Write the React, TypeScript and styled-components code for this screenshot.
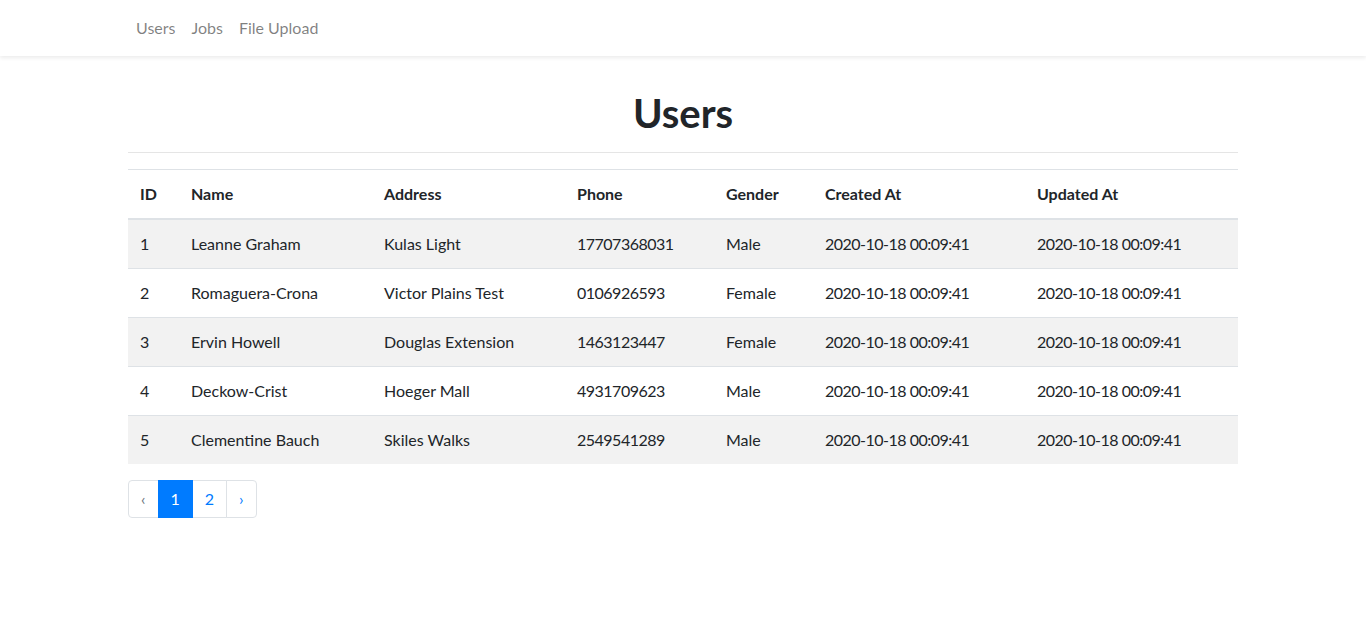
import React from "react";
import styled, { createGlobalStyle } from "styled-components";

const Global = createGlobalStyle`
  * { box-sizing: border-box; }
  body {
    margin: 0;
    font-family: "Lato", "Noto Sans", sans-serif;
    font-size: 16px;
    line-height: 1.5;
    color: #212529;
    background: #fff;
  }
`;

const NavBar = styled.nav`
  height: 56px;
  background: #fff;
  box-shadow: 0 2px 4px rgba(0, 0, 0, 0.08);
`;

const Container = styled.div`
  width: 1140px;
  margin: 0 auto;
  padding: 0 15px;
`;

const NavList = styled.ul`
  list-style: none;
  margin: 0;
  padding: 0;
  display: flex;
  height: 56px;
  align-items: center;
`;

const NavLink = styled.a`
  display: block;
  padding: 8px 8px;
  color: rgba(0, 0, 0, 0.5);
  text-decoration: none;
  font-size: 16px;
`;

const Main = styled(Container)`
  padding-top: 32px;
`;

const Title = styled.h1`
  margin: 0;
  padding-top: 3px;
  text-align: center;
  font-size: 40px;
  font-weight: 700;
  line-height: 45px;
`;

const Rule = styled.hr`
  margin: 16px 0;
  border: 0;
  border-top: 1px solid rgba(0, 0, 0, 0.1);
`;

const Table = styled.table`
  width: 100%;
  border-collapse: collapse;
  table-layout: fixed;
  margin-bottom: 16px;
`;

const Th = styled.th`
  padding: 12px;
  text-align: left;
  font-weight: 700;
  border-top: 1px solid #dee2e6;
  border-bottom: 2px solid #dee2e6;
  line-height: 24px;
`;

const Row = styled.tr<{ $striped: boolean }>`
  background: ${(p) => (p.$striped ? "#f2f2f2" : "#fff")};
`;

const Td = styled.td<{ $numeric?: boolean }>`
  padding: 12px;
  border-top: 1px solid #dee2e6;
  line-height: 24px;
  white-space: nowrap;
  letter-spacing: ${(p) => (p.$numeric ? "-0.5px" : "0")};
`;

const Pager = styled.ul`
  list-style: none;
  margin: 0;
  padding: 0;
  display: flex;
`;

const PageLink = styled.a<{ $active?: boolean; $first?: boolean; $last?: boolean; $muted?: boolean }>`
  display: block;
  padding: 8px 12px;
  line-height: 20px;
  font-size: 16px;
  text-decoration: none;
  margin-left: ${(p) => (p.$first ? "0" : "-1px")};
  border: 1px solid ${(p) => (p.$active ? "#007bff" : "#dee2e6")};
  background: ${(p) => (p.$active ? "#007bff" : "#fff")};
  color: ${(p) => (p.$active ? "#fff" : p.$muted ? "#6c757d" : "#007bff")};
  border-radius: ${(p) => (p.$first ? "4px 0 0 4px" : p.$last ? "0 4px 4px 0" : "0")};
  position: relative;
  z-index: ${(p) => (p.$active ? 1 : 0)};
`;

const cols = [51, 193, 193, 149, 99, 212, 213];
const headers = ["ID", "Name", "Address", "Phone", "Gender", "Created At", "Updated At"];
const users = [
  ["1", "Leanne Graham", "Kulas Light", "17707368031", "Male"],
  ["2", "Romaguera-Crona", "Victor Plains Test", "0106926593", "Female"],
  ["3", "Ervin Howell", "Douglas Extension", "1463123447", "Female"],
  ["4", "Deckow-Crist", "Hoeger Mall", "4931709623", "Male"],
  ["5", "Clementine Bauch", "Skiles Walks", "2549541289", "Male"],
];
const ts = "2020-10-18 00:09:41";

export default function App() {
  return (
    <>
      <Global />
      <NavBar>
        <Container>
          <NavList>
            <li><NavLink href="#">Users</NavLink></li>
            <li><NavLink href="#">Jobs</NavLink></li>
            <li><NavLink href="#">File Upload</NavLink></li>
          </NavList>
        </Container>
      </NavBar>
      <Main>
        <Title>Users</Title>
        <Rule />
        <Table>
          <colgroup>
            {cols.map((w, i) => (
              <col key={i} style={{ width: w }} />
            ))}
          </colgroup>
          <thead>
            <tr>
              {headers.map((h) => (
                <Th key={h}>{h}</Th>
              ))}
            </tr>
          </thead>
          <tbody>
            {users.map((u, i) => (
              <Row key={u[0]} $striped={i % 2 === 0}>
                {u.map((c, j) => (
                  <Td key={j} $numeric={j === 3}>{c}</Td>
                ))}
                <Td $numeric>{ts}</Td>
                <Td $numeric>{ts}</Td>
              </Row>
            ))}
          </tbody>
        </Table>
        <Pager>
          <li><PageLink href="#" $first $muted>‹</PageLink></li>
          <li><PageLink href="#" $active>1</PageLink></li>
          <li><PageLink href="#">2</PageLink></li>
          <li><PageLink href="#" $last>›</PageLink></li>
        </Pager>
      </Main>
    </>
  );
}
